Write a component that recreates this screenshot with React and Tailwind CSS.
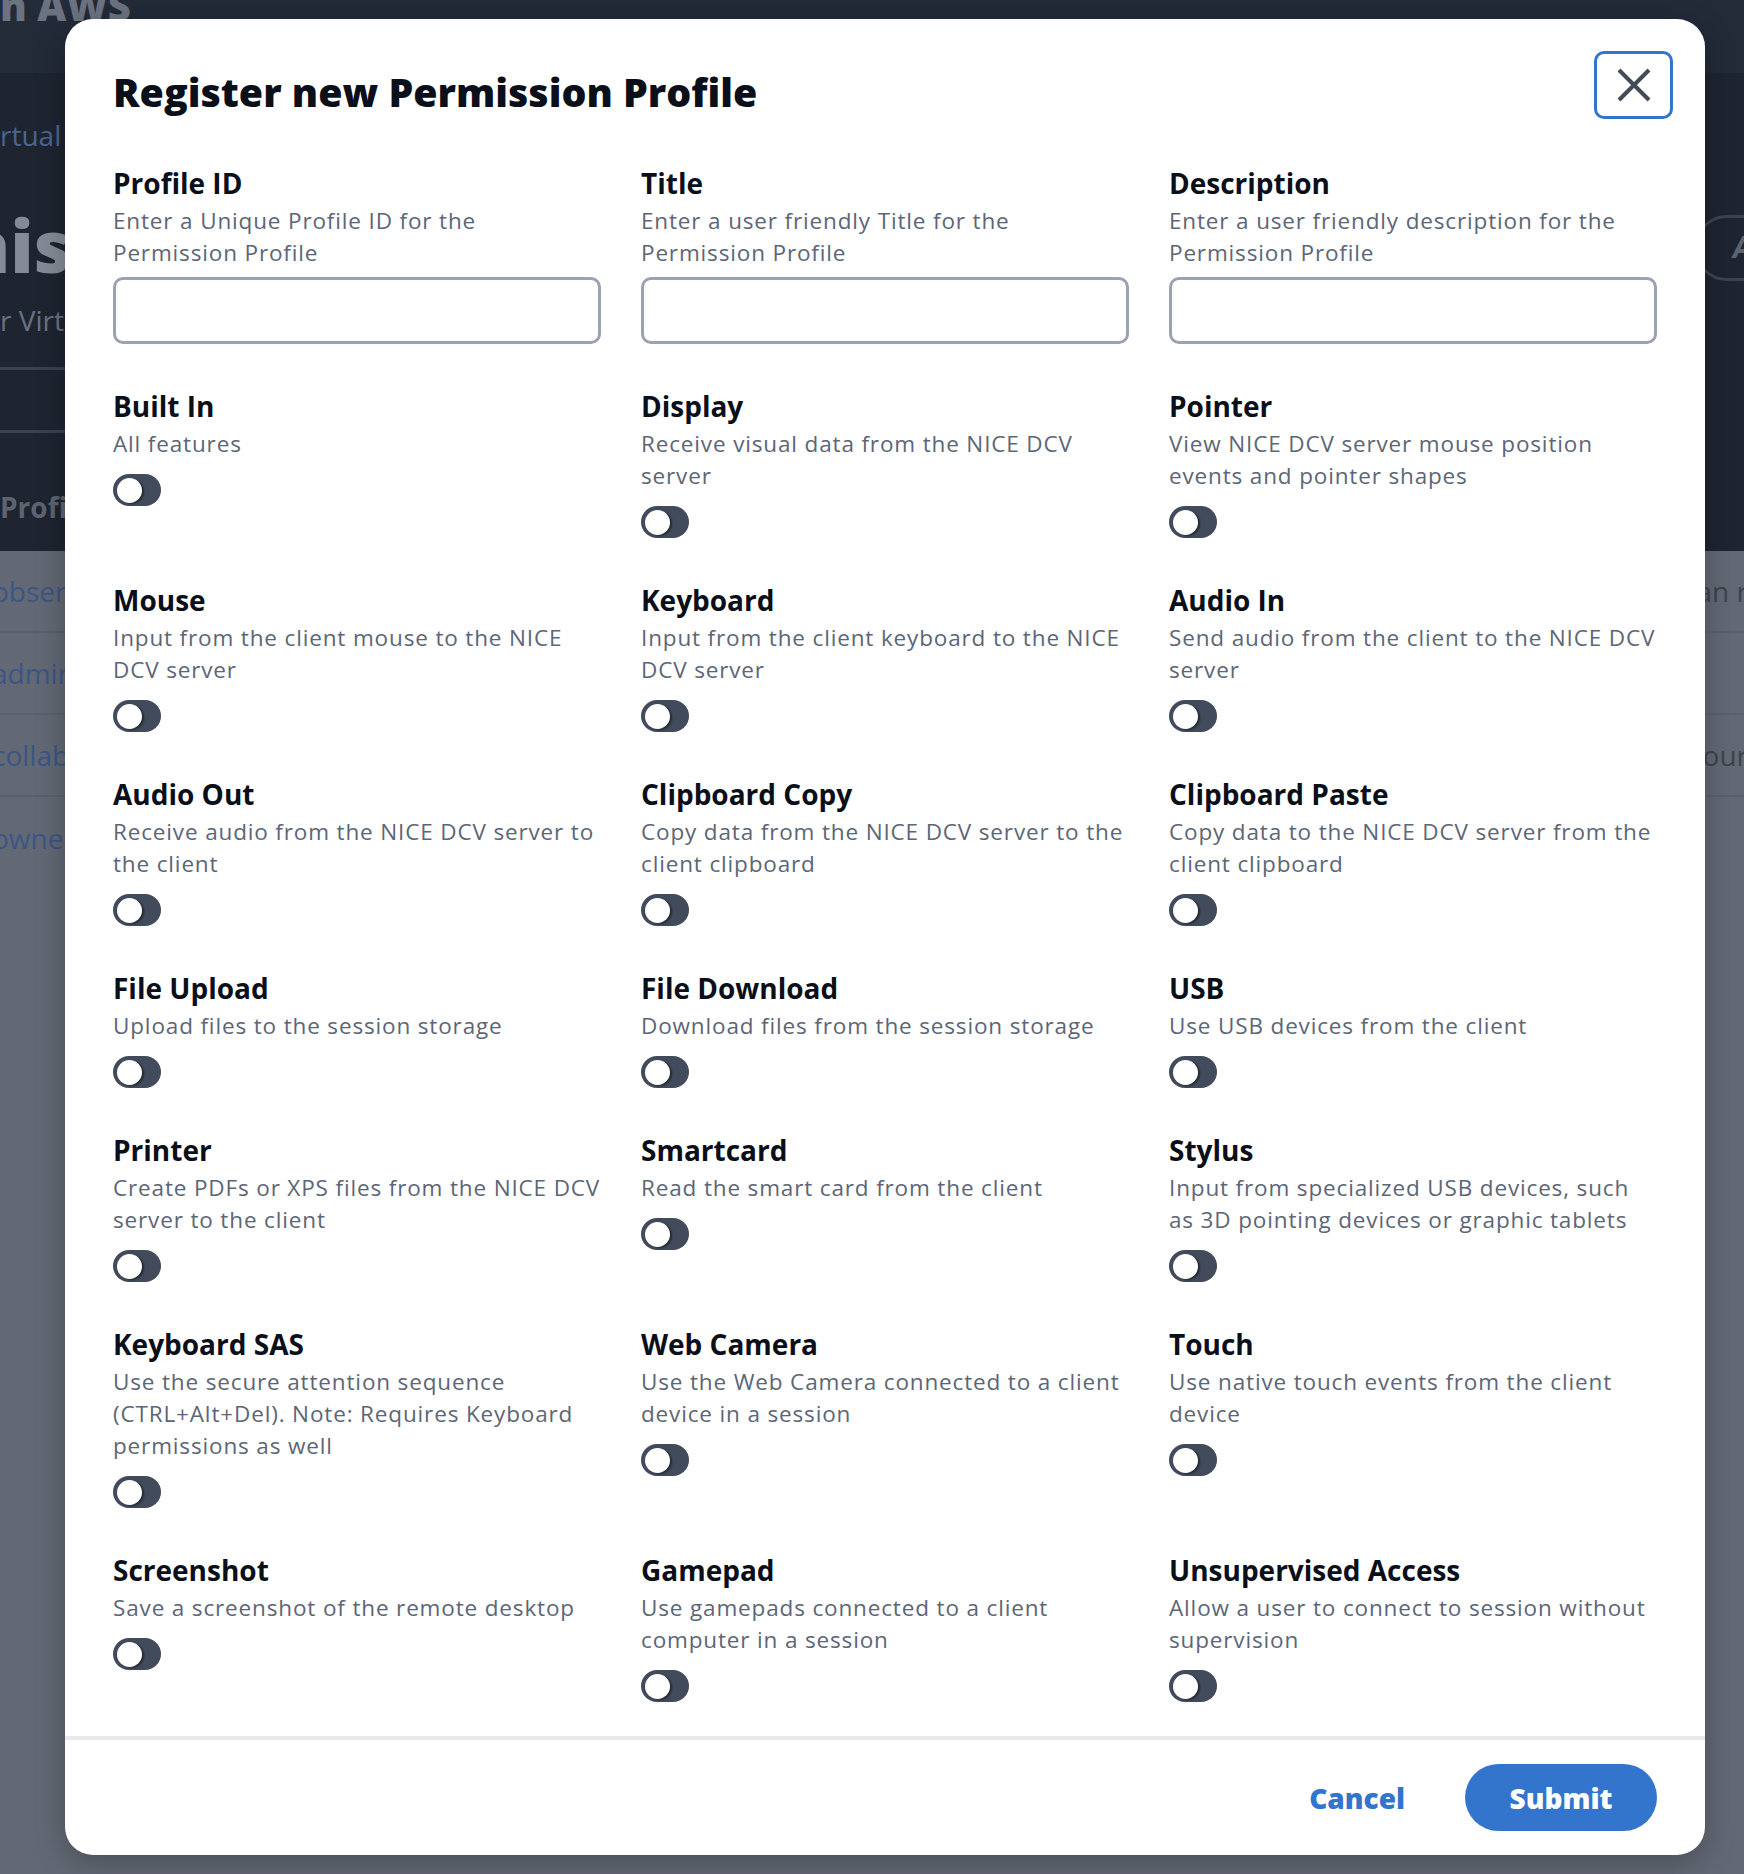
import React from "react";

const fields = [
  { id: "profile", label: "Profile ID", desc: "Enter a Unique Profile ID for the Permission Profile" },
  { id: "title", label: "Title", desc: "Enter a user friendly Title for the Permission Profile" },
  { id: "description", label: "Description", desc: "Enter a user friendly description for the Permission Profile" },
];

const permissions = [
  { label: "Built In", desc: "All features" },
  { label: "Display", desc: "Receive visual data from the NICE DCV server" },
  { label: "Pointer", desc: "View NICE DCV server mouse position events and pointer shapes" },
  { label: "Mouse", desc: "Input from the client mouse to the NICE DCV server" },
  { label: "Keyboard", desc: "Input from the client keyboard to the NICE DCV server" },
  { label: "Audio In", desc: "Send audio from the client to the NICE DCV server" },
  { label: "Audio Out", desc: "Receive audio from the NICE DCV server to the client" },
  { label: "Clipboard Copy", desc: "Copy data from the NICE DCV server to the client clipboard" },
  { label: "Clipboard Paste", desc: "Copy data to the NICE DCV server from the client clipboard" },
  { label: "File Upload", desc: "Upload files to the session storage" },
  { label: "File Download", desc: "Download files from the session storage" },
  { label: "USB", desc: "Use USB devices from the client" },
  { label: "Printer", desc: "Create PDFs or XPS files from the NICE DCV server to the client" },
  { label: "Smartcard", desc: "Read the smart card from the client" },
  { label: "Stylus", desc: "Input from specialized USB devices, such as 3D pointing devices or graphic tablets" },
  { label: "Keyboard SAS", desc: "Use the secure attention sequence (CTRL+Alt+Del). Note: Requires Keyboard permissions as well" },
  { label: "Web Camera", desc: "Use the Web Camera connected to a client device in a session" },
  { label: "Touch", desc: "Use native touch events from the client device" },
  { label: "Screenshot", desc: "Save a screenshot of the remote desktop" },
  { label: "Gamepad", desc: "Use gamepads connected to a client computer in a session" },
  { label: "Unsupervised Access", desc: "Allow a user to connect to session without supervision" },
];

const Toggle = () => (
  <button
    type="button"
    className="mt-[14px] flex h-[32px] w-[48px] items-center rounded-full bg-[#414b5b] pl-[4px]"
  >
    <span className="block h-[25px] w-[25px] rounded-full bg-white shadow-[2px_1px_2px_rgba(0,0,0,0.45)]" />
  </button>
);

const Background = () => (
  <div className="flex flex-col">
    <div className="h-[73px] overflow-hidden bg-[#232a38]">
      <p className="-mt-[20px] text-[40px] font-extrabold leading-[52px] text-[#6b7280]">n AWS</p>
    </div>
    <div className="flex h-[478px] justify-between bg-[#1e2430]">
      <div className="flex flex-col">
        <p className="mt-[44px] text-[28px] leading-[36px] text-[#49668f]">rtual Desktops</p>
        <p className="-ml-[38px] mt-[52px] text-[72px] font-extrabold leading-[80px] text-[#858b96]">nissions</p>
        <p className="mt-[17px] text-[28px] leading-[36px] text-[#6b7280]">r Virtual Desktops</p>
        <div className="mt-[29px] h-[3px] w-[80px] bg-[#3a4150]" />
        <div className="mt-[60px] h-[3px] w-[80px] bg-[#3a4150]" />
        <p className="mt-[56px] text-[28px] font-bold leading-[36px] text-[#5d6471]">Profiles</p>
      </div>
      <div className="mt-[142px] -mr-[60px] h-[66px] w-[110px] rounded-full border-[3px] border-[#3c4452] pl-[36px] text-[30px] font-bold italic leading-[58px] text-[#5d6471]">
        A
      </div>
    </div>
    <div className="flex flex-col bg-[#626874]">
      {[
        ["observer", "Can r"],
        ["admin", ""],
        ["collaborator", "hour"],
        ["owner", ""],
      ].map(([left, right], i) => (
        <div
          key={left}
          className={`flex h-[82px] items-center justify-between ${i < 3 ? "border-b-[2px] border-[#5a606b]" : ""}`}
        >
          <span className="-ml-[8px] text-[28px] text-[#3b5684]">{left}</span>
          <span className="-mr-[4px] text-[28px] text-[#3d434d]">{right}</span>
        </div>
      ))}
    </div>
  </div>
);

export default function App() {
  return (
    <div className="relative h-[1874px] w-full overflow-hidden bg-[#626874] font-['Open_Sans',sans-serif]">
      <Background />

      <div className="absolute left-[65px] top-[19px] flex h-[1836px] w-[1640px] flex-col rounded-[28px] bg-white shadow-[0_8px_30px_rgba(0,0,0,0.25)]">
        <div className="flex-1 px-[48px] pt-[32px]">
          <div className="flex items-start justify-between">
            <h1 className="mt-[15px] text-[39.3px] font-extrabold leading-[52px] text-[#0b0f19]">
              Register new Permission Profile
            </h1>
            <button
              type="button"
              className="-mr-[16px] flex h-[68px] w-[79px] items-center justify-center rounded-[10px] border-[3px] border-[#3374cd]"
            >
              <svg width="34" height="34" viewBox="0 0 34 34" fill="none">
                <path d="M2 2L32 32M32 2L2 32" stroke="#424b58" strokeWidth="4" />
              </svg>
            </button>
          </div>

          <div className="mt-[46px] grid grid-cols-3 gap-x-[40px] gap-y-[44px]">
            {fields.map((f) => (
              <div key={f.id} className="flex flex-col">
                <label className="text-[28px] font-bold leading-[36px] text-[#0b0f19]">{f.label}</label>
                <p className="mt-[4px] text-[22.5px] leading-[32px] tracking-[0.85px] text-[#5c6676]">{f.desc}</p>
                <input
                  type="text"
                  className="mt-[8px] h-[67px] w-full rounded-[10px] border-[3px] border-[#9ba3b0] px-4 text-[21px] outline-none"
                />
              </div>
            ))}
            {permissions.map((p) => (
              <div key={p.label} className="flex flex-col items-start">
                <span className="text-[28px] font-bold leading-[36px] text-[#0b0f19]">{p.label}</span>
                <p className="mt-[4px] text-[22.5px] leading-[32px] tracking-[0.85px] text-[#5c6676]">{p.desc}</p>
                <Toggle />
              </div>
            ))}
          </div>
        </div>

        <div className="flex items-center justify-end gap-[60px] border-t-[4px] border-[#e9eaec] px-[48px] pb-[24px] pt-[24px]">
          <button type="button" className="text-[28px] font-extrabold text-[#3374cd]">
            Cancel
          </button>
          <button
            type="button"
            className="h-[67px] w-[192px] rounded-full bg-[#3374cd] text-[28px] font-extrabold text-white"
          >
            Submit
          </button>
        </div>
      </div>
    </div>
  );
}
